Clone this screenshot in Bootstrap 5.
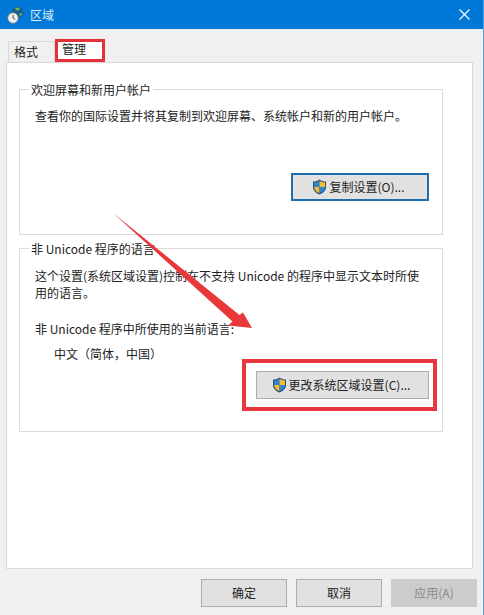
<!DOCTYPE html>
<html lang="zh">
<head>
<meta charset="utf-8">
<title>区域</title>
<link href="https://cdn.jsdelivr.net/npm/bootstrap@5.3.0/dist/css/bootstrap.min.css" rel="stylesheet">
<style>
html,body{height:615px;margin:0;overflow:hidden}
body{background:#f0f0f0;font:12px/17px "Noto Sans CJK SC","Liberation Sans",sans-serif;color:#222}
.win{height:615px;width:484px;border-right:1px solid #4aa3e6;position:relative}
.tbar{height:29px;background:#0078d7;color:#dcecfa;font-size:12px;padding-left:7px;gap:6px}
.tbar .xbtn{margin-left:auto;margin-right:13px;line-height:0}
.tabrow{height:33px;padding-left:8px;align-items:flex-end}
.wtab{height:21px;line-height:20px;font-size:12px;color:#222}
.wtab-a{width:47px;background:#f0f0f0;border:1px solid #d9d9d9;border-bottom:0;padding-left:5px}
.wtab-b{width:50px;height:23px;background:#fff;border:3px solid #e8303a;line-height:14px;padding-left:4px}
.wpanel{margin-left:6px;width:467px;height:507px;background:#fff;border:1px solid #d9d9d9;padding:26px 30px 0 12px}
.grp{border:1px solid #dcdcdc;padding:0 15px;width:424px}
.grp-1{height:146px;margin-bottom:13px}
.grp-2{height:184px}
.grp-t{display:block;width:fit-content;margin:-9px 0 0 -6px;padding:0 2px;background:#fff;height:17px}
.grp-p{margin:9px 0 0}
.grp-p1{margin-top:10px}
.grp-p2{margin-top:19px}
.ind{margin:8px 0 0 19px}
.wbtn{border-radius:0;background:#e1e1e1;border:1px solid #adadad;font-size:12px;line-height:16px;padding:0;color:#222;display:flex;align-items:center;justify-content:center;--bs-btn-hover-bg:#e1e1e1}
.w-copy{width:138px;height:28px;border:2px solid #1d6fb0;gap:2px;margin:49px 0 0 256px;padding-right:3px}
.redbox{width:195px;height:52px;border:4px solid #e8383f;margin:-3px 0 0 207px;padding:8px 0 0 10px}
.w-chg{width:173px;height:28px;gap:2px;padding-right:3px}
.wfoot{position:absolute;top:579px;left:201px;gap:9px}
.w-ok{width:86px;height:28px;font-size:12px}
.wbtn.w-dis:disabled{background:#ccc;border-color:#ccc;color:#8a8a8a;opacity:1}
.arrow{position:absolute;left:0;top:0;pointer-events:none}
</style>
</head>
<body>
<div class="win">
  <div class="tbar d-flex align-items-center">
    <svg width="17" height="18" viewBox="0 0 17 18"><circle cx="10.500" cy="6.500" r="6" fill="#1b5f8c"/><path d="M8 2c2-1 4-.8 5 .6l-1.500 1.800-2.500-.4zM12 8l2.500-1 .7 1.200-1.700 2z" fill="#63b85a"/><circle cx="6" cy="12" r="5.200" fill="#ececec" stroke="#8a8a8a" stroke-width=".7"/><path d="M6 9v3l2.200 1.200" fill="none" stroke="#444" stroke-width=".9"/></svg>
    <span>区域</span>
    <span class="xbtn"><svg width="11" height="11" viewBox="0 0 11 11"><path d="M.5.5l10 10M10.500.5l-10 10" stroke="#fff" stroke-width="1.100"/></svg></span>
  </div>
  <div class="tabrow d-flex">
    <div class="wtab wtab-a">格式</div>
    <div class="wtab wtab-b">管理</div>
  </div>
  <div class="wpanel">
    <div class="grp grp-1">
      <span class="grp-t">欢迎屏幕和新用户帐户</span>
      <p class="grp-p">查看你的国际设置并将其复制到欢迎屏幕、系统帐户和新的用户帐户。</p>
      <button type="button" class="btn wbtn w-copy">
        <svg width="15" height="16" viewBox="0 0 15 16"><path d="M7.500.5C5.500 2 3.500 2.500 1 2.600V8c0 3.500 3 6 6.500 7.500C11 14 14 11.500 14 8V2.600C11.500 2.500 9.500 2 7.500.5z" fill="#26517d"/><path d="M7.500 1.700V8H2V3.500c2-.2 3.800-.6 5.500-1.800z" fill="#2e86d0"/><path d="M7.500 1.700c1.700 1.200 3.500 1.600 5.500 1.800V8H7.500z" fill="#f5bd30"/><path d="M2 8h5.500v6.300C4.500 13 2.300 11 2 8z" fill="#f5bd30"/><path d="M7.500 8H13c-.3 3-2.500 5-5.500 6.300z" fill="#2e86d0"/></svg>
        <span>复制设置(O)...</span>
      </button>
    </div>
    <div class="grp grp-2">
      <span class="grp-t">非 Unicode 程序的语言</span>
      <p class="grp-p grp-p1">这个设置(系统区域设置)控制在不支持 Unicode 的程序中显示文本时所使用的语言。</p>
      <p class="grp-p grp-p2">非 Unicode 程序中所使用的当前语言:</p>
      <p class="ind">中文（简体，中国）</p>
      <div class="redbox">
        <button type="button" class="btn wbtn w-chg">
          <svg width="15" height="16" viewBox="0 0 15 16"><path d="M7.500.5C5.500 2 3.500 2.500 1 2.600V8c0 3.500 3 6 6.500 7.500C11 14 14 11.500 14 8V2.600C11.500 2.500 9.500 2 7.500.5z" fill="#26517d"/><path d="M7.500 1.700V8H2V3.500c2-.2 3.800-.6 5.500-1.800z" fill="#2e86d0"/><path d="M7.500 1.700c1.700 1.200 3.500 1.600 5.500 1.800V8H7.500z" fill="#f5bd30"/><path d="M2 8h5.500v6.300C4.500 13 2.300 11 2 8z" fill="#f5bd30"/><path d="M7.500 8H13c-.3 3-2.500 5-5.500 6.300z" fill="#2e86d0"/></svg>
          <span>更改系统区域设置(C)...</span>
        </button>
      </div>
    </div>
  </div>
  <div class="wfoot d-flex">
    <button type="button" class="btn wbtn w-ok">确定</button>
    <button type="button" class="btn wbtn w-ok">取消</button>
    <button type="button" class="btn wbtn w-ok w-dis" disabled>应用(A)</button>
  </div>
  <svg class="arrow" width="484" height="615" viewBox="0 0 484 615"><path d="M113 213L239.500 315 243 312.500 252 328 228 325.500 232.500 321.500z" fill="#e8383a"/></svg>
</div>
</body>
</html>
